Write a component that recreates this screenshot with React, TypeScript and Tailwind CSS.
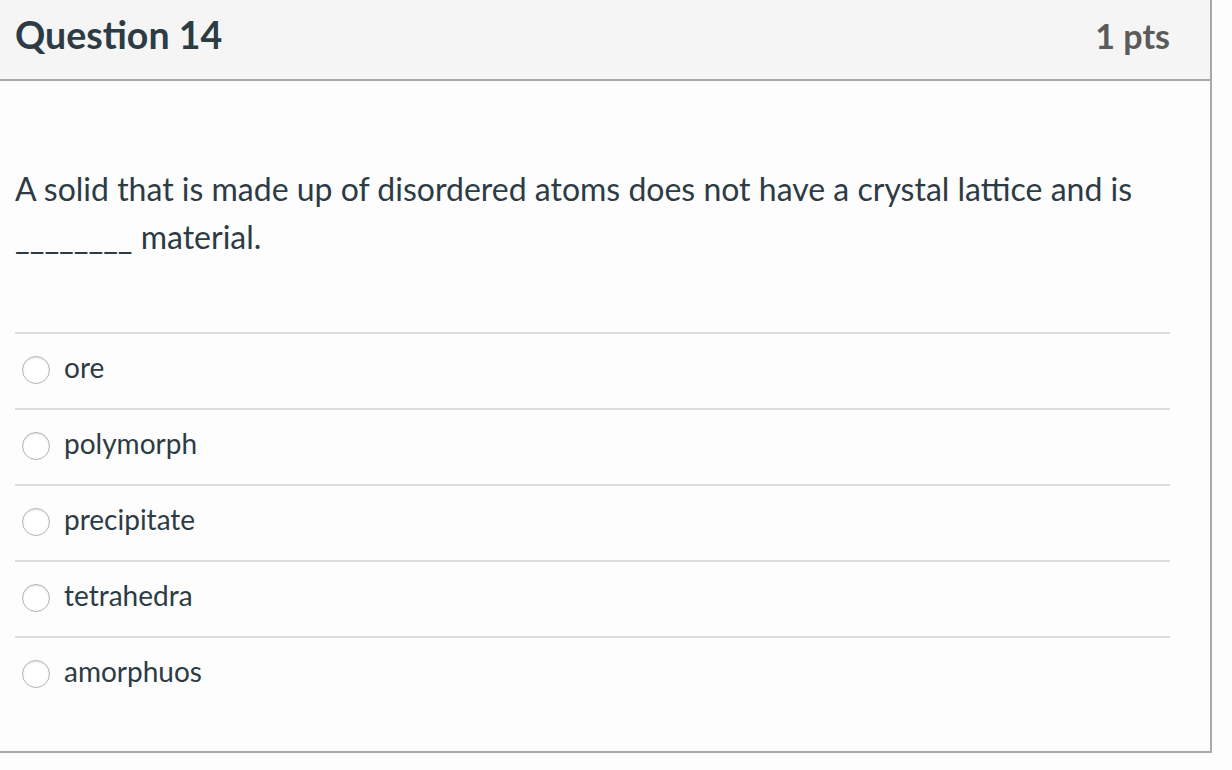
const options = ["ore", "polymorph", "precipitate", "tetrahedra", "amorphuos"];

function Radio() {
  return (
    <span className="flex size-[28px] shrink-0 items-center justify-center rounded-full border border-[#b4b4b4] bg-white shadow-[inset_0_1px_2px_rgba(0,0,0,0.12)]" />
  );
}

export default function App() {
  return (
    <div className="min-h-screen bg-[#fdfdfd] font-['Lato','Liberation_Sans',sans-serif] text-[#2d3b45]">
      <div className="w-[1212px] border-r-2 border-b-2 border-[#a9a9a9] bg-[#fdfdfd]">
        <header className="flex h-[81px] items-center justify-between border-b-2 border-[#a9a9a9] bg-[#f5f5f5] pb-[8px] pl-[15px] pr-[40px]">
          <h2 className="text-[37.5px] font-bold">Question 14</h2>
          <div className="text-[34px] font-bold text-[#5b5b5b]">1 pts</div>
        </header>

        <div className="pl-[15px] pr-[40px] pb-[39px]">
          <p className="pt-[84px] pb-[71px] text-[32px] leading-[48px]">
            A solid that is made up of disordered atoms does not have a crystal lattice and is{" "}
            <br />
            ________ material.
          </p>

          <div>
            {options.map((opt) => (
              <div key={opt} className="flex h-[76px] items-center gap-[14px] border-t-2 border-[#dddddd] pb-[2px] pl-[7px]">
                <Radio />
                <span className="mb-[6px] text-[28px]">{opt}</span>
              </div>
            ))}
          </div>
        </div>
      </div>
    </div>
  );
}
